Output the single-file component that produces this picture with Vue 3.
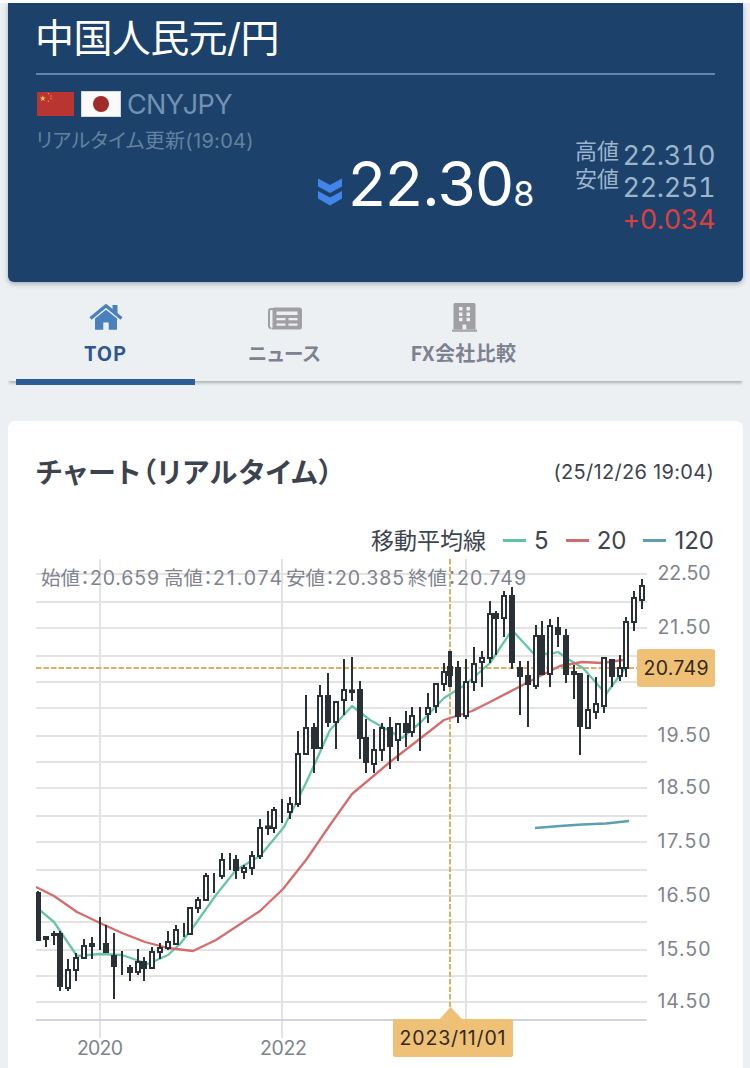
<template>
  <div class="page">
    <header class="rate-header">
      <h1>中国人民元/円</h1>
      <div class="pair">
        <svg class="flag-cn" width="37" height="24" viewBox="0 0 37 24">
          <rect width="37" height="24" fill="#b93532" />
          <path d="M5.8 3.2l.8 2.2h2.3L7 6.8l.7 2.2-1.900-1.300L3.900 9l.7-2.200-1.900-1.400h2.300z" fill="#f6c95c" />
          <circle v-for="s in smallStars" :key="s[1]" :cx="s[0]" :cy="s[1]" r=".75" fill="#e9a04c" />
        </svg>
        <svg class="flag-jp" width="40" height="26" viewBox="0 0 40 26">
          <rect width="40" height="26" fill="#cfd9e2" />
          <rect x="1" y="1" width="38" height="24" fill="#fbfafb" />
          <circle cx="20" cy="13" r="8" fill="#a02b29" />
        </svg>
        <span class="code">CNYJPY</span>
      </div>
      <div class="quote">
        <div class="updated">リアルタイム更新(19:04)</div>
        <div class="price">
          <svg class="down" width="26" height="28" viewBox="0 0 26 28">
            <path d="M1 0.500L13 7l12-6.500v8L13 15 1 8.500zM1 13l12 6.500L25 13v7.500L13 27.500 1 20.500z" fill="#4285ea" />
          </svg>
          <span class="main">22.30</span><span class="pip">8</span>
        </div>
        <div class="labels">
          <div>高値</div>
          <div>安値</div>
        </div>
        <div class="values">
          <div>22.310</div>
          <div>22.251</div>
          <div class="diff">+0.034</div>
        </div>
      </div>
    </header>

    <nav class="tabs">
      <a class="tab active">
        <svg width="34" height="32" viewBox="0 0 34 32">
          <path d="M1.500 17.500L17 4.800l15.500 12.700" fill="none" stroke="#4a80bd" stroke-width="3.400" stroke-linejoin="round" />
          <path d="M23.500 4h5v10l-5-4.500zM6 17.500L17 8.700l11 8.800v11.300h-8.300v-7.300h-5.400v7.300H6z" fill="#4a80bd" />
        </svg>
        <span class="top">TOP</span>
      </a>
      <a class="tab">
        <svg width="34" height="32" viewBox="0 0 34 32">
          <path d="M5 8H3a2 2 0 0 0-2 2v15a2.300 2.300 0 0 0 2.300 2.300" fill="none" stroke="#a0a0a2" stroke-width="2" />
          <path d="M6.500 6.500h25a2.500 2.500 0 0 1 2.500 2.500v17a2.500 2.500 0 0 1-2.500 2.500H3c1.400-.8 1.500-1.400 1.500-3v-17a2 2 0 0 1 2-2z" fill="#a0a0a2" />
          <path d="M8.500 10.500h21V14h-21zM8.500 17h9v2.200h-9zM20.500 17h9v2.200h-9zM8.500 22.500h9v2.200h-9zM20.500 22.500h9v2.200h-9z" fill="#edf0f3" />
        </svg>
        <span class="news">ニュース</span>
      </a>
      <a class="tab">
        <svg width="34" height="32" viewBox="0 0 34 32">
          <path d="M8 2h19a1.500 1.500 0 0 1 1.500 1.500v25H30v2.300H5v-2.300h1.500v-25A1.500 1.500 0 0 1 8 2z" fill="#a0a0a2" />
          <path d="M12 6h3.500v3.500H12zM19.500 6H23v3.500h-3.500zM12 11.500h3.500V15H12zM19.500 11.500H23V15h-3.500zM12 16.800h3.500v3.500H12zM19.500 16.800H23v3.500h-3.500zM15.500 23.500h3.800v5h-3.800z" fill="#edf0f3" />
          <path d="M5.500 28.800h24" stroke="#c8cacc" stroke-width=".7" />
        </svg>
        <span class="fx">FX会社比較</span>
      </a>
    </nav>

    <section class="card">
      <div class="card-head">
        <h2>チャート（リアルタイム）</h2>
        <time>(25/12/26 19:04)</time>
      </div>
      <div class="legend">
        <span class="name">移動平均線</span>
        <span v-for="l in legend" :key="l.label" class="item">
          <i :class="l.cls"></i>{{ l.label }}
        </span>
      </div>
      <svg class="chart" width="684" height="510" viewBox="36 558 684 510">
        <!-- grid -->
        <g stroke="#e3e3e3" stroke-width="2">
          <line v-for="y in gridY" :key="y" x1="36" x2="647" :y1="y" :y2="y" />
          <line x1="100" x2="100" y1="559" y2="1038" />
          <line x1="282" x2="282" y1="559" y2="1038" />
          <line x1="466" x2="466" y1="559" y2="1038" />
        </g>
        <line x1="36" x2="647" y1="1020" y2="1020" stroke="#cfd2df" stroke-width="2" />
        <g stroke="#dcb163" stroke-width="2" stroke-dasharray="5.500 2">
          <line x1="36" x2="637" y1="668" y2="668" />
          <line x1="450" x2="450" y1="559" y2="1010" />
        </g>

        <!-- moving averages -->
        <g fill="none" stroke-width="2.300" stroke-linejoin="round">
          <polyline :points="ma5" stroke="#66c6a8" />
          <polyline :points="ma20" stroke="#d56d6c" />
          <polyline :points="ma120" stroke="#5b9fb3" />
        </g>

        <!-- candles -->
        <g stroke="#293036" stroke-width="2">
          <template v-for="c in candles" :key="c[0]">
            <line :x1="c[0]" :x2="c[0]" :y1="c[1]" :y2="c[4]" :stroke-width="c[0] === 450 ? 4 : 2" />
            <rect :x="c[0] - 2" :y="c[2]" width="4" :height="c[3] - c[2]" :fill="c[5] ? '#293036' : '#fff'" />
          </template>
        </g>

        <g class="axis">
          <text v-for="t in yLabels" :key="t[0]" x="657.500" :y="t[1]" textLength="53">{{ t[0] }}</text>
          <text x="77" y="1055" textLength="46">2020</text>
          <text x="260" y="1055" textLength="47">2022</text>
        </g>
        <g class="ohlc">
          <template v-for="o in ohlc" :key="o.x">
            <text :x="o.x" y="585">{{ o.name }}：</text>
            <text :x="o.x + 49" y="585" textLength="69">{{ o.value }}</text>
          </template>
        </g>

        <!-- cursor labels -->
        <rect x="637" y="649" width="78" height="38" rx="3" fill="#eec176" />
        <path d="M439 1020l11.500-13 12.500 13z" fill="#eec176" />
        <rect x="393" y="1019" width="120" height="38" rx="2" fill="#eec176" />
        <g class="cursor">
          <text x="643.500" y="675" textLength="65">20.749</text>
          <text x="399.500" y="1045" textLength="106">2023/11/01</text>
        </g>
      </svg>
    </section>
  </div>
</template>

<script setup>
const smallStars = [
  [11.5, 1.8],
  [14, 4],
  [14.1, 6.8],
  [11.4, 9.2],
];

const legend = [
  { label: "5", cls: "green" },
  { label: "20", cls: "red" },
  { label: "120", cls: "blue" },
];

const ohlc = [
  { name: "始値", value: "20.659", x: 41 },
  { name: "高値", value: "21.074", x: 164 },
  { name: "安値", value: "20.385", x: 286 },
  { name: "終値", value: "20.749", x: 408 },
];

const gridY = [574, 602, 628, 656, 682, 708, 736, 762, 788, 816, 842, 870, 896, 922, 950, 976, 1002];

const yLabels = [
  ["22.50", 579.5],
  ["21.50", 633.5],
  ["19.50", 741.5],
  ["18.50", 793.5],
  ["17.50", 847.5],
  ["16.50", 901.5],
  ["15.50", 955.5],
  ["14.50", 1007.5],
];

const ma5 =
  "36,907 54,922 77,956 100,954 122,955 148,964 168,955 180,944 194,926 216,895 236,870 260,856 284,827 306,783 330,730 352,706 370,720 402,738 421,722 444,698 465,685 490,663 512,630 533,653 550,654 558,652 568,659 583,668 606,694 620,675 626,667";
const ma20 =
  "36,887 54,896 77,912 100,923 122,933 145,942 168,948 193,951 216,940 260,911 283,889 306,860 330,825 352,794 390,762 444,720 472,711 490,702 517,688 540,676 560,666 582,662 602,663 623,660";
const ma120 = "535,828 560,826 582,824.5 606,823.5 629,821";

// x, high, body top, body bottom, low, filled
const candles = [
  [38, 891, 893, 940, 940, 1],
  [46, 936, 937, 939, 947, 0],
  [54, 931, 934, 935, 945, 1],
  [60, 931, 934, 986, 991, 1],
  [68, 959, 970, 988, 991, 0],
  [76, 953, 958, 970, 981, 0],
  [84, 939, 946, 958, 958, 0],
  [92, 937, 944, 946, 959, 1],
  [100, 917, 944, 944, 950, 1],
  [106, 925, 944, 952, 953, 1],
  [114, 933, 956, 966, 999, 1],
  [122, 951, 968, 968, 975, 1],
  [130, 965, 968, 972, 981, 1],
  [138, 949, 962, 972, 975, 0],
  [144, 957, 962, 968, 981, 1],
  [152, 947, 952, 968, 968, 0],
  [160, 943, 948, 952, 959, 0],
  [168, 931, 942, 948, 950, 0],
  [176, 925, 930, 944, 944, 0],
  [184, 923, 932, 932, 937, 1],
  [190, 908, 908, 934, 934, 0],
  [198, 897, 900, 908, 913, 0],
  [206, 873, 876, 900, 900, 0],
  [214, 873, 876, 876, 893, 1],
  [222, 853, 860, 876, 879, 0],
  [230, 853, 860, 860, 870, 1],
  [236, 855, 860, 870, 879, 1],
  [244, 865, 868, 872, 879, 0],
  [252, 851, 856, 868, 875, 0],
  [260, 819, 828, 856, 859, 0],
  [268, 811, 826.5, 828, 835, 1],
  [274, 807, 810, 828, 833, 0],
  [282, 799, 812, 812, 823, 1],
  [290, 797, 804, 812, 819, 0],
  [298, 731, 754, 804, 807, 0],
  [306, 695, 728, 754, 754, 0],
  [314, 723, 728, 748, 773, 1],
  [320, 685, 696, 748, 748, 0],
  [328, 673, 696, 722, 727, 1],
  [336, 702, 702, 722, 749, 0],
  [344, 659, 690, 700, 715, 0],
  [352, 657, 690.5, 692, 701, 1],
  [360, 681, 690, 738, 759, 1],
  [366, 719, 738, 762, 773, 1],
  [374, 729, 750, 764, 773, 0],
  [382, 723, 728, 750, 761, 0],
  [390, 717, 728, 746, 769, 1],
  [398, 724, 724, 740, 761, 0],
  [406, 711, 724, 732, 747, 1],
  [412, 707, 716, 732, 737, 0],
  [420, 707, 714, 714, 751, 1],
  [428, 693, 708, 714, 723, 0],
  [436, 683, 684, 706, 713, 0],
  [444, 663, 672, 684, 691, 0],
  [450, 651, 667, 675, 687, 1],
  [458, 661, 668, 716, 723, 1],
  [466, 659, 682, 716, 719, 0],
  [474, 647, 664, 682, 691, 0],
  [482, 651, 658, 662, 687, 0],
  [490, 601, 614, 658, 663, 0],
  [496, 611, 614, 618, 655, 1],
  [504, 591, 596, 618, 637, 0],
  [512, 587, 596, 662, 669, 1],
  [520, 661, 668, 676, 715, 1],
  [528, 661, 676, 684, 727, 1],
  [536, 625, 636, 686, 689, 0],
  [542, 621, 636, 674, 674, 1],
  [550, 619, 626, 674, 687, 0],
  [558, 617, 628, 634, 647, 1],
  [566, 629, 636, 674, 683, 1],
  [574, 665, 672, 674, 699, 1],
  [580, 673, 674, 726, 755, 1],
  [588, 675, 710, 728, 728, 0],
  [596, 677, 704, 712, 719, 0],
  [604, 658, 658, 706, 713, 0],
  [612, 659, 660, 676, 687, 1],
  [620, 655, 668, 676, 681, 0],
  [626, 617, 622, 668, 677, 0],
  [634, 591, 598, 622, 631, 0],
  [642, 579, 586, 600, 609, 0],
];
</script>

<style>
body {
  background: #edf0f3;
}
</style>

<style scoped>
.page {
  width: 750px;
  height: 1068px;
  overflow: hidden;
  box-sizing: border-box;
  padding: 0 7px 0 8px;
  border-top: 3px solid #fafcfd;
  background: #edf0f3;
  font-family: Inter, "Noto Sans CJK JP", sans-serif;
}
.rate-header {
  height: 279px;
  box-sizing: border-box;
  padding: 0 28px;
  background: #1c426c;
  border-radius: 0 0 6px 6px;
  box-shadow: 0 2px 5px rgba(30, 50, 70, 0.35);
}
h1 {
  margin: 0 0 0 -1px;
  height: 72px;
  box-sizing: border-box;
  color: #fff;
  font-size: 39px;
  font-weight: 400;
  line-height: 69px;
  letter-spacing: -0.6px;
}
.pair {
  display: flex;
  align-items: center;
  height: 60px;
  box-sizing: border-box;
  margin-top: -2px;
  border-top: 2px solid #6086aa;
}
.flag-cn {
  margin: 0 7px 0 1px;
}
.code {
  margin-left: 6px;
  color: #7391b0;
  font-size: 27px;
  letter-spacing: -0.6px;
}
.quote {
  display: flex;
  align-items: flex-start;
  margin-top: 2px;
}
.updated {
  width: 280px;
  margin-top: -9px;
  color: #64829f;
  font-size: 20px;
  line-height: 30px;
  letter-spacing: 0.3px;
  font-feature-settings: "palt";
  white-space: nowrap;
}
.price {
  display: flex;
  align-items: baseline;
  width: 259px;
  color: #fff;
  line-height: 80px;
  margin-top: 9px;
}
.down {
  margin-left: 1px;
}
.main {
  margin-left: 5px;
  font-size: 62px;
  letter-spacing: -0.8px;
}
.pip {
  font-size: 34px;
}
.labels {
  color: #9db4cb;
  font-size: 22px;
  line-height: 28px;
  margin-top: 2px;
  white-space: nowrap;
}
.values {
  flex: 1;
  color: #9db4cb;
  font-size: 27px;
  line-height: 32px;
  text-align: right;
  letter-spacing: -0.4px;
  font-variant-numeric: tabular-nums;
  margin-top: 5px;
}
.values .diff {
  color: #da4040;
}
.tabs {
  display: flex;
  height: 99px;
  padding-left: 8px;
  box-shadow: 0 3px 3px -1px rgba(0, 0, 0, 0.28);
  clip-path: inset(0 0 -10px 0);
}
.tab {
  display: flex;
  flex-direction: column;
  align-items: center;
  width: 179px;
  height: 103px;
  box-sizing: border-box;
  padding-top: 19px;
  color: #7e8290;
  font-family: "Noto Sans CJK JP", sans-serif;
  font-weight: 700;
  font-size: 19.5px;
  line-height: 39px;
}
.tab.active {
  border-bottom: 6px solid #2d5c98;
  color: #2f5792;
}
.top {
  font-size: 20px;
  letter-spacing: 0.8px;
}
.news {
  font-feature-settings: "palt";
  letter-spacing: 0.3px;
}
.fx {
  font-size: 20px;
  letter-spacing: 0.4px;
}
.card {
  margin-top: 40px;
  height: 660px;
  padding: 0 28px;
  background: #fff;
  border-radius: 7px 7px 0 0;
}
.card-head {
  display: flex;
  justify-content: space-between;
  align-items: center;
  height: 102px;
  color: #3c434f;
}
h2 {
  margin: -2px 0 0;
  font-size: 28px;
  font-weight: 700;
  font-family: "Noto Sans CJK JP", sans-serif;
  font-feature-settings: "palt";
  letter-spacing: 1.4px;
}
time {
  font-size: 20px;
  letter-spacing: 0.3px;
  margin-right: 1px;
}
.legend {
  display: flex;
  justify-content: flex-end;
  align-items: center;
  height: 35px;
  padding-right: 1px;
  color: #3e4450;
  font-size: 24px;
}
.name {
  margin-top: -4px;
  font-size: 23px;
}
.item {
  display: flex;
  align-items: center;
  margin-left: 17px;
}
.item i {
  width: 23px;
  height: 3px;
  margin-right: 8px;
}
.green {
  background: #62c2a7;
}
.red {
  background: #ce6d6f;
}
.blue {
  background: #5e9eb2;
}
.chart {
  display: block;
}
.axis {
  fill: #80838e;
  font-size: 19.5px;
}
.ohlc {
  fill: #80838e;
  font-size: 19.5px;
  font-feature-settings: "palt";
}
.cursor {
  fill: #33291a;
  font-size: 19.5px;
}
</style>
